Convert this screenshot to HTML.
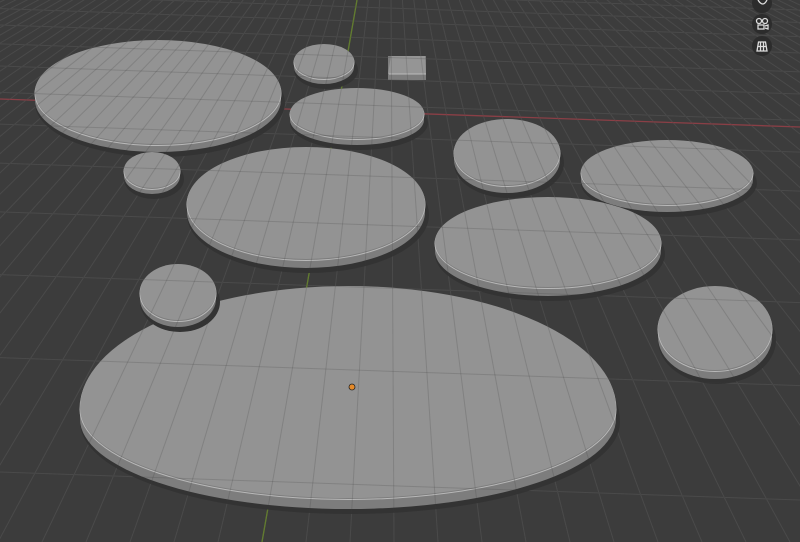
<!DOCTYPE html>
<html><head><meta charset="utf-8"><style>
html,body{margin:0;padding:0;background:#3d3d3d;overflow:hidden}
svg{display:block}
</style></head><body>
<svg id="s" width="800" height="542" viewBox="0 0 800 542" xmlns="http://www.w3.org/2000/svg">
<rect width="800" height="542" fill="#3c3c3c"/>
<g id="grid" stroke="#4e4e4e" stroke-width="1"></g>
<line x1="0" y1="99" x2="800" y2="127" stroke="#8a3f46" stroke-width="1.3"/>
<line x1="357" y1="0" x2="262" y2="542" stroke="#6b8a2e" stroke-width="1.3"/>
<g id="discs"></g>
<g id="grid2" stroke="rgba(60,60,60,0.2)" stroke-width="1"></g>
<circle cx="352" cy="387" r="3" fill="#e58a2a" stroke="#222" stroke-width="0.8"/>
<g fill="#2c2c2c"><circle cx="762" cy="3" r="10"/><circle cx="762" cy="24" r="10"/><circle cx="762" cy="46" r="10"/></g>
<g stroke="#ddd" fill="none" stroke-width="1.3">
<path d="M758 0 q5 8 9 0"/>
<circle cx="759" cy="21" r="2.5"/><circle cx="765" cy="21" r="2.5"/><rect x="758" y="25" width="6" height="4"/><path d="M765 26l3-1v4l-3-1"/>
<path d="M757 51l1.5-9h7l1.5 9z M758 46.5h8 M760.5 42v9 M763.5 42v9"/>
</g>
</svg>
<script>
const NS="http://www.w3.org/2000/svg";
function mk(p,t,a){const e=document.createElementNS(NS,t);for(const k in a)e.setAttribute(k,a[k]);p.appendChild(e);return e;}
const g=document.getElementById('grid'),g2=document.getElementById('grid2');
const h=-189,k=3.64e-4;
let ys=[];let y=-4;while(y<560){ys.push(y);y+=k*(y-h)*(y-h);}
const vx=390;
for(const gg of [g,g2]){
 for(const yy of ys){mk(gg,'line',{x1:0,y1:yy-14,x2:800,y2:yy+14});}
 for(let i=-40;i<=40;i++){const xb=262+44*i;mk(gg,'line',{x1:vx,y1:h,x2:xb,y2:542});}
}
const d=document.getElementById('discs');
function shape(cx,cy,rx,rt,rb,dy){return `M${cx-rx} ${cy+dy} A${rx} ${rt} 0 0 1 ${cx+rx} ${cy+dy} A${rx} ${rb} 0 0 1 ${cx-rx} ${cy+dy}Z`;}
const discs=[[158,92,123,52,52,8],[324,61,30,17,17,6],[357,113,67,25,25,7],[152,170,28,18,18,6],[306,203,119,56,56,9],[507,152,53,33,33,8],[667,172,86,32,32,8],[548,242,113,45,45,9],[715,328,57,42,42,9],[348,408,268,122,90,11],[178,292,38,28,28,7]];
for(const [cx,cy,rx,rt,rb,t] of discs){
 mk(d,'path',{d:shape(cx+2,cy,rx+2,rt+2,rb+2,t+3),fill:'#333'});
 mk(d,'rect',{x:cx-rx,y:cy,width:2*rx,height:t,fill:'#7d7d7d'});
 mk(d,'path',{d:shape(cx,cy,rx,rt,rb,t),fill:'#7d7d7d'});
 mk(d,'path',{d:shape(cx,cy,rx,rt,rb,1.5),fill:'none',stroke:'#b8b8b8','stroke-width':1});
 mk(d,'path',{d:shape(cx,cy,rx,rt,rb,0),fill:'#939393'});
}
mk(d,'rect',{x:388,y:56,width:38,height:24,fill:'#7d7d7d'});
mk(d,'path',{d:'M391 56h34l1 18h-38z',fill:'#959595'});
mk(d,'line',{x1:389,y1:74,x2:426,y2:74,stroke:'#bbb'});
</script>
</body></html>
